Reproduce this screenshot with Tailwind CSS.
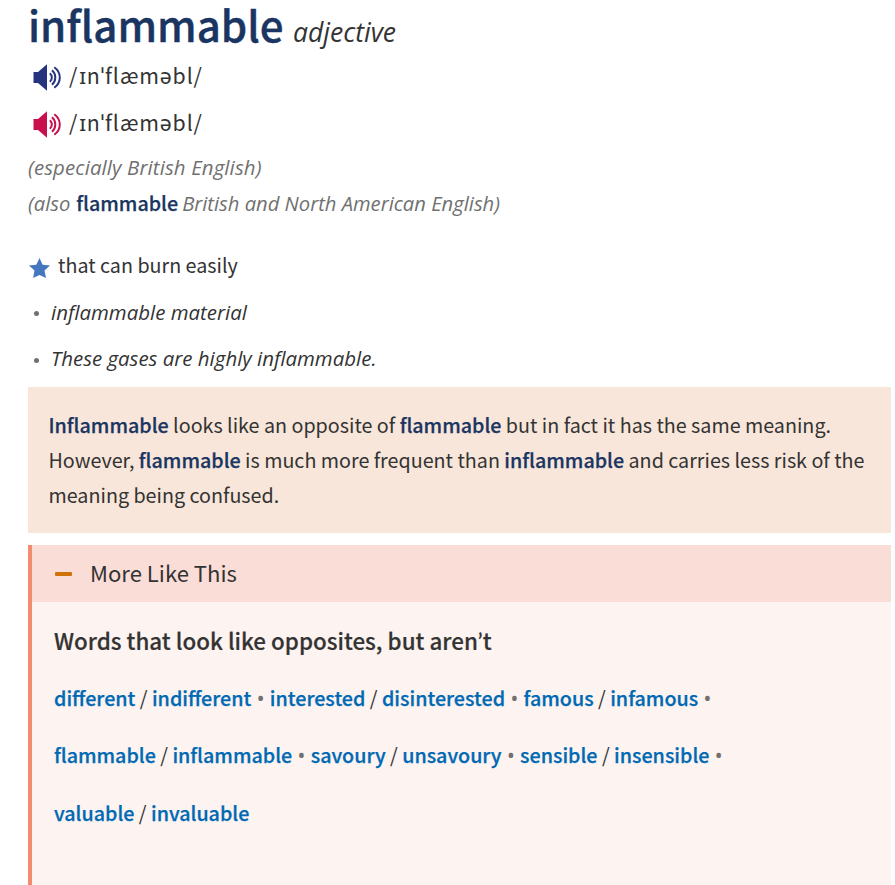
<!DOCTYPE html>
<html lang="en">
<head>
<meta charset="utf-8">
<title>inflammable</title>
<script src="https://cdn.jsdelivr.net/npm/@tailwindcss/browser@4"></script>
</head>
<body class="h-[885px] overflow-hidden bg-white pl-7 pr-1 font-['Noto_Sans_CJK_SC','Noto_Sans',sans-serif] text-[19.72px] text-[#333] whitespace-nowrap">
<svg class="hidden">
  <symbol id="speaker" viewBox="0 0 28 27">
    <path fill="currentColor" d="M0.500 8h4.500L14 0.300v26.400L5 19H0.500z"/>
    <g fill="none" stroke="currentColor" stroke-width="2">
      <path d="M16.800 9.200c2.700 2.200 2.700 6.400 0 8.600"/>
      <path d="M19 6.300c4.400 3.700 4.400 10.700 0 14.400"/>
      <path d="M21.300 3.300c7.300 5.300 7.300 15.100 0 20.400"/>
    </g>
  </symbol>
</svg>
<header>
  <div class="flex h-[48px] items-baseline leading-[48px]">
    <h1 class="text-[42px] font-medium text-[#1a3561] [-webkit-text-stroke:0.4px_#1a3561]">inflammable</h1>
    <span class="ml-[9.5px] font-['Open_Sans',sans-serif] text-[26.5px] italic">adjective</span>
  </div>
  <div class="mt-1 flex h-[47px] items-center pl-[5px]">
    <svg class="mt-[3px] h-[27px] w-7 text-[#26337f]"><use href="#speaker"/></svg>
    <span class="ml-2 text-[21.3px] leading-[46px] tracking-[0.85px]"><span class="mr-px">/</span>ɪn<span class="font-['Noto_Sans']">ˈ</span>flæməbl/</span>
  </div>
  <div class="flex h-[47px] items-center pl-[5px]">
    <svg class="mt-[3px] h-[27px] w-7 text-[#c9104c]"><use href="#speaker"/></svg>
    <span class="ml-2 text-[21.3px] leading-[46px] tracking-[0.85px]"><span class="mr-px">/</span>ɪn<span class="font-['Noto_Sans']">ˈ</span>flæməbl/</span>
  </div>
  <div class="mt-[3px] h-9 font-['Open_Sans',sans-serif] text-[20.4px] leading-9 tracking-[0.12px] italic text-[#707070]">(especially British English)</div>
  <div class="h-9 font-['Open_Sans',sans-serif] text-[20.2px] leading-9 italic text-[#707070]">(also <b class="ml-[0.7px] -mr-[1.2px] font-['Noto_Sans_CJK_SC'] text-[19.7px] font-medium not-italic text-[#1a3561] [-webkit-text-stroke:0.25px_#1a3561]">flammable</b> British and North American English)</div>
</header>
<main>
  <div class="mt-[21px] flex h-[46px] items-center">
    <svg class="mt-[5px] h-5 w-[22px] text-[#4577bf]" viewBox="0 0 22 20"><path fill="currentColor" d="M11.500 0l3.100 6.700 7.400.9-5.500 5 1.500 7.400L11.500 16.900 5.100 20 6.500 12.600 1 7.600l7.300-.9z"/></svg>
    <span class="ml-2 leading-[46px]">that can burn easily</span>
  </div>
  <ul class="font-['Open_Sans',sans-serif] text-[20.45px] italic">
    <li class="flex h-[47px] items-center leading-[48px]"><i class="mt-[4px] mr-[12px] ml-[6px] size-[5px] rounded-full bg-[#707070]"></i>inflammable material</li>
    <li class="flex h-[46px] items-center leading-[46px]"><i class="mt-[4px] mr-[12px] ml-[6px] size-[5px] rounded-full bg-[#707070]"></i>These gases are highly inflammable.</li>
  </ul>
  <div class="mt-[6px] h-[146px] bg-[#f8e6da] pt-5 pl-[20.500px] leading-[35px] [&_b]:font-medium [&_b]:text-[#1a3561] [&_b]:[-webkit-text-stroke:0.25px_#1a3561]">
    <b>Inflammable</b> looks like an opposite of <b>flammable</b> but in fact it has the same meaning.<br>
    However, <b>flammable</b> is much more frequent than <b>inflammable</b> and carries less risk of the<br>
    meaning being confused.
  </div>
  <section class="mt-3 h-[340px] border-l-4 border-[#f38b70] bg-[#fdf3f0]">
    <div class="flex h-[57px] items-center bg-[#fbddd7] pl-[23px]">
      <i class="h-[4px] w-[17px] rounded-[1px] bg-[#cf7208]"></i>
      <span class="ml-[18px] h-[57px] text-[22.1px] leading-[55px]">More Like This</span>
    </div>
    <div class="pl-[22px]">
      <h2 class="mt-[20px] h-9 text-[22.4px] leading-9 font-medium [-webkit-text-stroke:0.2px_#333]">Words that look like opposites, but aren<span class="font-['Lato'] leading-none">’</span>t</h2>
      <p class="mt-[11px] leading-[57.300px] [&_a]:font-medium [&_a]:text-[#0069b4] [&_a]:[-webkit-text-stroke:0.25px_#0069b4] [&_i]:inline-block [&_i]:w-[9.7px] [&_i]:text-center [&_i]:text-[22px] [&_i]:leading-none [&_i]:text-[#707070] [&_i]:not-italic [&_i]:font-['Open_Sans']">
        <a>different</a> / <a>indifferent</a> <i>•</i> <a>interested</a> / <a>disinterested</a> <i>•</i> <a>famous</a> / <a>infamous</a> <i>•</i><br>
        <a>flammable</a> / <a>inflammable</a> <i>•</i> <a>savoury</a> / <a>unsavoury</a> <i>•</i> <a>sensible</a> / <a>insensible</a> <i>•</i><br>
        <a>valuable</a> / <a>invaluable</a>
      </p>
    </div>
  </section>
</main>
</body>
</html>
